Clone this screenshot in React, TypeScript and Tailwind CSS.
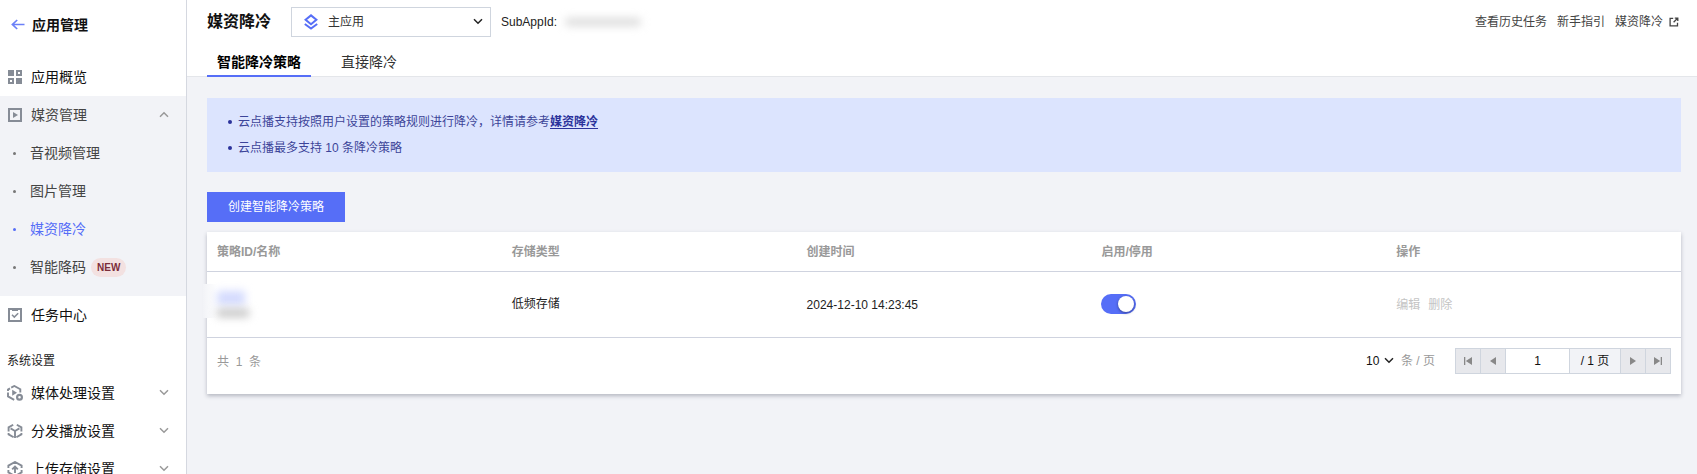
import { useState } from 'react';
import type { ReactNode } from 'react';

const Chevron = ({ up = false, className = '' }: { up?: boolean; className?: string }) => (
  <svg viewBox="0 0 10 10" className={`h-[10px] w-[10px] shrink-0 ${className}`} fill="none" stroke="currentColor" strokeWidth="1.5">
    <path d={up ? 'M1 6.7 5 2.7 9 6.7' : 'M1 2.3 5 6.3 9 2.3'} />
  </svg>
);

const BackArrow = () => (
  <svg viewBox="0 0 14 12" className="h-3 w-[14px]" fill="none" stroke="currentColor" strokeWidth="1.7">
    <path d="M6.2 1 1.4 5.5l4.8 4.5M1.4 5.5H13.5" />
  </svg>
);

const OverviewIcon = () => (
  <svg viewBox="0 0 14 14" className="h-[14px] w-[14px]" fill="currentColor">
    <path d="M0 0h6v6H0zM8 8h6v6H8z" />
    <path fillRule="evenodd" d="M8 0h6v6H8zM10 2v2h2V2zM0 8h6v6H0zM2 10v2h2v-2z" />
  </svg>
);

const MediaIcon = () => (
  <svg viewBox="0 0 14 14" className="h-[14px] w-[14px]">
    <path d="M1 1h12v12H1z" fill="none" stroke="currentColor" strokeWidth="2" />
    <path d="M5 4l5 3-5 3z" fill="currentColor" />
  </svg>
);

const TaskIcon = () => (
  <svg viewBox="0 0 14 14" className="h-[14px] w-[14px]" fill="none" stroke="currentColor">
    <path d="M1 1h12v12H1z" strokeWidth="2" />
    <path d="M4 1.5h6" strokeWidth="3" />
    <path d="M4 6.8 6.3 9.1 10.2 5.3" strokeWidth="1.5" />
  </svg>
);

const ProcessIcon = () => (
  <svg viewBox="0 0 16 16" className="h-4 w-4" fill="none" stroke="currentColor" strokeWidth="1.9">
    <path d="M1 6V4.6L3 3.4M4.2 2.6 7.3 1l6 3.2v3.3M1 7.6v3.8l6.2 3.4" />
    <path d="M5.2 4.8 10 7.8 5.2 10.8z" fill="currentColor" stroke="none" />
    <circle cx="12.5" cy="12.2" r="2.4" strokeWidth="2.2" />
  </svg>
);

const DeliverIcon = () => (
  <svg viewBox="0 0 16 16" className="h-4 w-4" fill="none" stroke="currentColor" strokeWidth="1.9">
    <path d="M1.6 8.6V4.4L6.2 1.7M9.8 1.7l4.6 2.7v4.2M1.6 10v1.4l5 2.9M14.4 10v1.4l-5 2.9" />
    <path d="M3.6 5.4 8 8l4.4-2.6M8 8v7" />
  </svg>
);

const UploadIcon = () => (
  <svg viewBox="0 0 16 16" className="h-4 w-4" fill="none" stroke="currentColor" strokeWidth="1.9">
    <path d="M1.4 7V4.6L8 1l6.6 3.6V7M1.4 9v2.4L6 14M14.6 9v2.4L10 14" />
    <path d="M8 12V6M5.2 8.4 8 5.6l2.8 2.8" />
  </svg>
);

const AppIcon = () => (
  <svg viewBox="0 0 14 16" className="h-4 w-[14px] shrink-0 text-[#566ef7]" fill="none" stroke="currentColor" strokeWidth="2">
    <path d="M7 1.4 12.4 5.8 7 10.2 1.6 5.8zM.8 10 7 14.6 13.2 10" />
  </svg>
);

const ExternalIcon = () => (
  <svg viewBox="0 0 10 10" className="h-[10px] w-[10px]" fill="none" stroke="currentColor" strokeWidth="1.3">
    <path d="M4.2 1.4H1.1v7.5h7.4V5.8M5.8 1.1h3v3M8.6 1.3 4.6 5.3" />
  </svg>
);

const mediaLinks = [
  { label: '音视频管理' },
  { label: '图片管理' },
  { label: '媒资降冷', active: true },
  { label: '智能降码', badge: 'NEW' },
];

const settings = [
  { label: '媒体处理设置', icon: <ProcessIcon /> },
  { label: '分发播放设置', icon: <DeliverIcon /> },
  { label: '上传存储设置', icon: <UploadIcon /> },
];

const columns = ['策略ID/名称', '存储类型', '创建时间', '启用/停用', '操作'];

const NavIcon = ({ children }: { children: ReactNode }) => (
  <span className="flex w-4 shrink-0 justify-center text-[#868c96]">{children}</span>
);

const Sidebar = () => (
  <nav className="w-[187px] shrink-0 overflow-hidden border-r border-[#d5d8e0] bg-white text-sm text-[#111]">
    <a href="#apps" className="flex h-[50px] items-center gap-[7px] pl-[11px] font-bold">
      <span className="text-[#6b80f8]"><BackArrow /></span>
      应用管理
    </a>
    <a href="#overview" className="mt-2 flex h-[38px] items-center gap-2 pl-[7px]">
      <NavIcon><OverviewIcon /></NavIcon>
      应用概览
    </a>

    <div className="bg-[#f2f3f7] pb-[10px] text-[#444]">
      <button className="flex h-[38px] w-full items-center gap-2 pr-[17px] pl-[7px]">
        <NavIcon><MediaIcon /></NavIcon>
        媒资管理
        <Chevron up className="ml-auto text-[#999]" />
      </button>
      <ul>
        {mediaLinks.map((item) => (
          <li key={item.label}>
            <a
              href="#media"
              className={`flex h-[38px] items-center pl-[13px] ${item.active ? 'text-[#566ef7]' : ''}`}
            >
              <span className={`mr-[14px] h-[3px] w-[3px] rounded-full ${item.active ? 'bg-[#566ef7]' : 'bg-[#777]'}`} />
              {item.label}
              {item.badge && (
                <span className="ml-[5px] rounded-full bg-[#f3e1e1] px-[6px] text-[10px] leading-[19px] font-bold text-[#7c2d3a]">
                  {item.badge}
                </span>
              )}
            </a>
          </li>
        ))}
      </ul>
    </div>

    <a href="#tasks" className="flex h-[38px] items-center gap-2 pl-[7px]">
      <NavIcon><TaskIcon /></NavIcon>
      任务中心
    </a>

    <h2 className="mt-[15px] mb-px flex h-6 items-center pl-[7px] text-xs text-[#222]">系统设置</h2>
    {settings.map((item) => (
      <button key={item.label} className="flex h-[38px] w-full items-center gap-2 pr-[17px] pl-[7px]">
        <NavIcon>{item.icon}</NavIcon>
        {item.label}
        <Chevron className="ml-auto text-[#999]" />
      </button>
    ))}
  </nav>
);

const Header = () => (
  <header className="border-b border-[#e4e6ea] bg-white pr-4 pl-5">
    <div className="flex h-[44px] items-center">
      <h1 className="text-base font-bold text-[#111]">媒资降冷</h1>
      <label className="ml-5 flex h-[30px] w-[200px] items-center border border-[#cfd5de] pr-[7px] pl-3">
        <AppIcon />
        <select aria-label="应用" className="ml-[10px] flex-1 appearance-none bg-transparent text-[#333] outline-none">
          <option>主应用</option>
        </select>
        <Chevron className="text-[#222]" />
      </label>
      <span className="ml-[10px] text-[#222]">SubAppId:</span>
      <span className="ml-2 h-2 w-[76px] rounded-full bg-[#dcdcdc] blur-xs" />
      <div className="ml-auto flex items-center gap-[10px] text-[#444]">
        <a href="#history">查看历史任务</a>
        <a href="#guide">新手指引</a>
        <a href="#docs" className="mr-[2px] flex items-center gap-[6px]">
          媒资降冷
          <ExternalIcon />
        </a>
      </div>
    </div>
    <div role="tablist" className="-mb-px flex gap-5 text-sm">
      <button role="tab" aria-selected="true" className="h-[33px] border-b-2 border-[#566ef7] px-[10px] pt-1 font-bold text-black">
        智能降冷策略
      </button>
      <button role="tab" aria-selected="false" className="h-[33px] border-b-2 border-transparent px-[10px] pt-1 text-[#333]">
        直接降冷
      </button>
    </div>
  </header>
);

const PageButton = ({ label, children }: { label: string; children: ReactNode }) => (
  <button aria-label={label} className="flex w-6 items-center justify-center bg-[#e7e8ec] text-[#888]">
    <svg viewBox="0 0 8 8" className="h-2 w-2" fill="currentColor">{children}</svg>
  </button>
);

const Pagination = () => (
  <div className="flex h-[56px] items-start justify-between px-[10px] pt-[10px]">
    <p className="leading-7 text-[#999] whitespace-pre">共  1  条</p>
    <div className="flex items-center">
      <label className="flex items-center text-[#999]">
        <select aria-label="每页条数" className="appearance-none bg-transparent text-[#111] outline-none">
          <option>10</option>
        </select>
        <Chevron className="mx-[7px] ml-1 text-[#222]" />
        条 / 页
      </label>
      <div className="ml-5 flex h-[26px] gap-px border border-[#cfd5de] bg-[#cfd5de] text-[#111]">
        <PageButton label="首页"><path d="M0 0h1.3v8H0zM8 0v8L1.8 4z" /></PageButton>
        <PageButton label="上一页"><path d="M7 0v8L1 4z" /></PageButton>
        <input aria-label="页码" defaultValue="1" className="w-[63px] bg-white text-center outline-none" />
        <span className="w-[50px] bg-[#f2f3f7] text-center leading-6">/ 1 页</span>
        <PageButton label="下一页"><path d="M1 0v8l6-4z" /></PageButton>
        <PageButton label="末页"><path d="M6.7 0H8v8H6.7zM0 0v8l6.2-4z" /></PageButton>
      </div>
    </div>
  </div>
);

export default function App() {
  const [enabled, setEnabled] = useState(true);

  return (
    <div lang="zh-CN" className="flex h-screen overflow-hidden bg-[#f2f3f7] font-['Liberation_Sans','Noto_Sans_CJK_SC',sans-serif] text-xs">
      <Sidebar />
      <div className="min-w-0 flex-1">
        <Header />
        <main className="pt-[21px] pr-4 pl-5">
          <ul className="bg-[#dce4fe] px-[21px] pt-[11px] pb-[11px] leading-[26px] text-[#3c4499]">
            <li className="flex items-center">
              <span className="mr-[6px] h-1 w-1 rounded-full bg-[#2b329b]" />
              {'云点播支持按照用户设置的策略规则进行降冷\uFF0C详情请参考'}
              <a href="#docs" className="font-bold text-[#2b329b] underline underline-offset-2">媒资降冷</a>
            </li>
            <li className="flex items-center">
              <span className="mr-[6px] h-1 w-1 rounded-full bg-[#2b329b]" />
              云点播最多支持 10 条降冷策略
            </li>
          </ul>

          <button className="mt-5 block h-[30px] bg-[#566ef7] px-[21px] text-white">创建智能降冷策略</button>

          <section className="mt-[10px] bg-white shadow-[0_2px_4px_rgba(54,58,80,0.32)]">
            <table className="w-full table-fixed text-left">
              <thead>
                <tr className="h-[39px] border-b border-[#cfd3df] text-[#999]">
                  {columns.map((name) => (
                    <th key={name} className="px-[10px] pt-[2px] font-bold">{name}</th>
                  ))}
                </tr>
              </thead>
              <tbody>
                <tr className="h-[66px] border-b border-[#cfd3df] text-[#222]">
                  <td className="relative px-[10px]">
                    <span className="absolute top-3 -left-1 h-[34px] w-[14px] bg-linear-to-r from-[#f2f3f7] to-white" />
                    <span className="relative block h-[14px] w-7 bg-[#d3dafe] blur-xs" />
                    <span className="relative mt-1 block h-2 w-8 bg-[#c4c4c4] blur-xs" />
                  </td>
                  <td className="px-[10px]">低频存储</td>
                  <td className="px-[10px] pt-[2px]">2024-12-10 14:23:45</td>
                  <td className="px-[10px]">
                    <input
                      type="checkbox"
                      role="switch"
                      aria-label="启用/停用"
                      checked={enabled}
                      onChange={() => setEnabled(!enabled)}
                      className="flex h-5 w-[35px] appearance-none items-center rounded-full bg-[#bbb] px-[2px] before:h-4 before:w-4 before:rounded-full before:bg-white before:shadow-[0_1px_3px_rgba(0,0,0,0.4)] before:content-[''] checked:justify-end checked:bg-[#566ef7]"
                    />
                  </td>
                  <td className="px-[10px] pt-[2px]">
                    <div className="flex gap-2 text-[#c4c4c4]">
                      <button disabled>编辑</button>
                      <button disabled>删除</button>
                    </div>
                  </td>
                </tr>
              </tbody>
            </table>
            <Pagination />
          </section>
        </main>
      </div>
    </div>
  );
}
